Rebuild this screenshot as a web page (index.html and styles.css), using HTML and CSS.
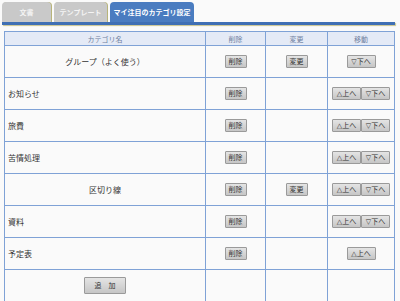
FILE: index.html
```html
<!DOCTYPE html>
<html lang="ja">

<head>
  <meta charset="UTF-8">
  <meta name="viewport" content="width=device-width, initial-scale=1.0">
  <title>マイ注目のカテゴリ設定</title>
  <link rel="stylesheet" href="styles.css">
</head>

<body>
  <div class="tabs">
    <div class="tab">文書</div>
    <div class="tab tab-wide">テンプレート</div>
    <div class="tab tab-active">マイ注目のカテゴリ設定</div>
  </div>
  <div class="tab-bar"></div>

  <table class="categories">
    <colgroup>
      <col class="col-name">
      <col class="col-del">
      <col class="col-edit">
      <col class="col-move">
    </colgroup>
    <tr>
      <th>カテゴリ名</th>
      <th>削除</th>
      <th>変更</th>
      <th>移動</th>
    </tr>
    <tr>
      <td class="center">グループ（よく使う）</td>
      <td><button class="btn">削除</button></td>
      <td><button class="btn">変更</button></td>
      <td><button class="btn btn-move"><span class="mark">▽</span>下へ</button></td>
    </tr>
    <tr>
      <td>お知らせ</td>
      <td><button class="btn">削除</button></td>
      <td></td>
      <td><button class="btn btn-move"><span class="mark">△</span>上へ</button><button class="btn btn-move"><span class="mark">▽</span>下へ</button></td>
    </tr>
    <tr>
      <td>旅費</td>
      <td><button class="btn">削除</button></td>
      <td></td>
      <td><button class="btn btn-move"><span class="mark">△</span>上へ</button><button class="btn btn-move"><span class="mark">▽</span>下へ</button></td>
    </tr>
    <tr>
      <td>苦情処理</td>
      <td><button class="btn">削除</button></td>
      <td></td>
      <td><button class="btn btn-move"><span class="mark">△</span>上へ</button><button class="btn btn-move"><span class="mark">▽</span>下へ</button></td>
    </tr>
    <tr>
      <td class="center">区切り線</td>
      <td><button class="btn">削除</button></td>
      <td><button class="btn">変更</button></td>
      <td><button class="btn btn-move"><span class="mark">△</span>上へ</button><button class="btn btn-move"><span class="mark">▽</span>下へ</button></td>
    </tr>
    <tr>
      <td>資料</td>
      <td><button class="btn">削除</button></td>
      <td></td>
      <td><button class="btn btn-move"><span class="mark">△</span>上へ</button><button class="btn btn-move"><span class="mark">▽</span>下へ</button></td>
    </tr>
    <tr>
      <td>予定表</td>
      <td><button class="btn">削除</button></td>
      <td></td>
      <td><button class="btn btn-move"><span class="mark">△</span>上へ</button></td>
    </tr>
    <tr>
      <td class="center"><button class="btn btn-add">追　加</button></td>
      <td></td>
      <td></td>
      <td></td>
    </tr>
  </table>
</body>

</html>
```

FILE: styles.css
```css
body {
  margin: 0;
  padding: 2px 0 0 2px;
  background: #fafafa;
  font-family: "Noto Sans CJK JP", "Noto Sans", sans-serif;
  font-size: 8px;
  color: #333;
}

/* タブ */
.tabs {
  display: flex;
  gap: 3px;
  height: 20px;
}

.tab {
  width: 49px;
  background: #c9c9c9;
  color: #f4f4f4;
  font-weight: bold;
  font-size: 7px;
  line-height: 20px;
  text-align: center;
  border-radius: 4px 4px 0 0;
  box-shadow: 1px 0 0 #b8b47a;
}

.tab-wide {
  width: 53px;
}

.tab-active {
  width: 84px;
  background: #4a7cc0;
  color: #fff;
  box-shadow: none;
}

.tab-bar {
  width: 393px;
  height: 3px;
  background: #3f6fb4;
  box-shadow: 1px 1px 1px #c9c48e;
}

/* カテゴリ一覧 */
.categories {
  margin: 6px 0 0 2px;
  border-collapse: collapse;
  width: 391px;
  table-layout: fixed;
}

.col-name {
  width: 201px;
}

.col-del {
  width: 60px;
}

.col-edit {
  width: 62px;
}

.categories th,
.categories td {
  border: 1px solid #7fa2d6;
  padding: 0;
  text-align: center;
}

.categories th {
  height: 13px;
  background: #e4eaf6;
  color: #6f7f9f;
  font-weight: normal;
  font-size: 7px;
}

.categories td {
  height: 31px;
}

.categories td:first-child {
  text-align: left;
  padding-left: 3px;
}

.categories td.center {
  text-align: center;
  padding-left: 0;
}

.btn {
  min-width: 22px;
  height: 13px;
  padding: 0 3px;
  margin: 0;
  font-family: inherit;
  font-size: 7px;
  line-height: 11px;
  color: #333;
  background: linear-gradient(#e4e4e4, #c6c6c6);
  border: 1px solid #9a9a9a;
  border-radius: 1px;
  vertical-align: middle;
}

.btn-move {
  width: 29px;
  padding: 0;
}

.btn .mark {
  font-family: "DejaVu Sans", sans-serif;
  color: #333;
}

.btn-add {
  width: 42px;
  height: 17px;
}
```
